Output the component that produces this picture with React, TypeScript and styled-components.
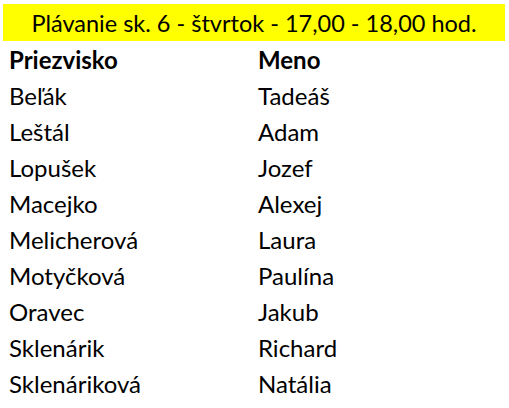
import { Fragment } from "react";
import styled, { createGlobalStyle } from "styled-components";

const GlobalStyle = createGlobalStyle`
  html, body {
    margin: 0;
    padding: 0;
    background: #ffffff;
  }
  body {
    font-family: Lato, "Open Sans", "Liberation Sans", sans-serif;
    color: #000000;
  }
`;

const Sheet = styled.div`
  width: 509px;
  height: 408px;
  overflow: hidden;
  padding: 4px 4px 0 3px;
  box-sizing: border-box;
`;

const Title = styled.div`
  height: 37px;
  background: #ffff00;
  display: flex;
  align-items: center;
  justify-content: center;
  font-size: 23.5px;
  padding-top: 1px;
  box-sizing: border-box;
`;

const Table = styled.div`
  display: grid;
  grid-template-columns: 249px 1fr;
  grid-auto-rows: 36px;
  padding-left: 6px;
`;

const Cell = styled.div<{ $head?: boolean }>`
  display: flex;
  align-items: center;
  font-size: 24px;
  font-weight: ${(p) => (p.$head ? 700 : 400)};
  white-space: nowrap;
`;

const rows: [string, string][] = [
  ["Beľák", "Tadeáš"],
  ["Leštál", "Adam"],
  ["Lopušek", "Jozef"],
  ["Macejko", "Alexej"],
  ["Melicherová", "Laura"],
  ["Motyčková", "Paulína"],
  ["Oravec", "Jakub"],
  ["Sklenárik", "Richard"],
  ["Sklenáriková", "Natália"],
];

export default function App() {
  return (
    <>
      <GlobalStyle />
      <Sheet>
        <Title>Plávanie sk. 6 - štvrtok - 17,00 - 18,00 hod.</Title>
        <Table>
          <Cell $head>Priezvisko</Cell>
          <Cell $head>Meno</Cell>
          {rows.map(([last, first]) => (
            <Fragment key={last}>
              <Cell>{last}</Cell>
              <Cell>{first}</Cell>
            </Fragment>
          ))}
        </Table>
      </Sheet>
    </>
  );
}
